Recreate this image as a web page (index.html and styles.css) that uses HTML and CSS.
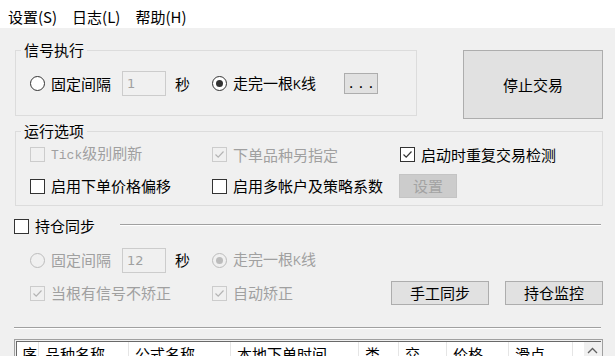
FILE: index.html
```html
<!DOCTYPE html>
<html lang="zh-CN">
<head>
  <meta charset="UTF-8">
  <title>交易设置</title>
  <link rel="stylesheet" href="styles.css">
</head>
<body>

  <div class="menubar">
    <span>设置(S)</span>
    <span>日志(L)</span>
    <span>帮助(H)</span>
  </div>

  <div class="main">

    <div class="top">
      <fieldset class="group signal">
        <legend>信号执行</legend>
        <div class="cols">
          <div class="cell">
            <label class="opt"><span class="radio"></span><span>固定间隔</span></label>
            <span class="num">1</span>
            <span class="unit">秒</span>
          </div>
          <div class="cell">
            <label class="opt"><span class="radio on"></span><span>走完一根<span class="half">K</span>线</span></label>
            <button class="btn dots">...</button>
          </div>
        </div>
      </fieldset>
      <button class="btn stop">停止交易</button>
    </div>

    <fieldset class="group options">
      <legend>运行选项</legend>
      <div class="cols opt-row">
        <label class="opt off"><span class="box"></span><span><span class="mono">Tick</span>级别刷新</span></label>
        <label class="opt off"><span class="box"><svg viewBox="0 0 13 13"><path d="M2.5 6.5 L5.2 9.2 L10.5 3.5"/></svg></span><span>下单品种另指定</span></label>
        <label class="opt"><span class="box"><svg viewBox="0 0 13 13"><path d="M2.5 6.5 L5.2 9.2 L10.5 3.5"/></svg></span><span>启动时重复交易检测</span></label>
      </div>
      <div class="cols opt-row second">
        <label class="opt"><span class="box"></span><span>启用下单价格偏移</span></label>
        <label class="opt"><span class="box"></span><span>启用多帐户及策略系数</span></label>
        <button class="btn setup" disabled>设置</button>
      </div>
    </fieldset>

    <div class="sync-head">
      <label class="opt"><span class="box"></span><span>持仓同步</span></label>
      <div class="rule"></div>
    </div>

    <div class="sync-body">
      <div class="cols sync-row">
        <div class="cell">
          <label class="opt off"><span class="radio"></span><span>固定间隔</span></label>
          <span class="num">12</span>
          <span class="unit">秒</span>
        </div>
        <label class="opt off"><span class="radio on"></span><span>走完一根<span class="half">K</span>线</span></label>
      </div>
      <div class="cols sync-row buttons-row">
        <label class="opt off"><span class="box"><svg viewBox="0 0 13 13"><path d="M2.5 6.5 L5.2 9.2 L10.5 3.5"/></svg></span><span>当根有信号不矫正</span></label>
        <label class="opt off"><span class="box"><svg viewBox="0 0 13 13"><path d="M2.5 6.5 L5.2 9.2 L10.5 3.5"/></svg></span><span>自动矫正</span></label>
        <div class="actions">
          <button class="btn action">手工同步</button>
          <button class="btn action">持仓监控</button>
        </div>
      </div>
    </div>

    <div class="sep"></div>

    <div class="table">
      <div class="thead">
        <div class="th w-no">序</div>
        <div class="th w-name">品种名称</div>
        <div class="th w-formula">公式名称</div>
        <div class="th w-time">本地下单时间</div>
        <div class="th w-type">类</div>
        <div class="th w-trade">交</div>
        <div class="th w-price">价格</div>
        <div class="th w-slip">滑点</div>
        <div class="th-fill"></div>
        <div class="scroll">
          <svg viewBox="0 0 17 12"><path d="M4 8 L8.5 3.5 L13 8"/></svg>
        </div>
      </div>
    </div>

  </div>

</body>
</html>
```

FILE: styles.css
```css
* {
  box-sizing: border-box;
}

body {
  margin: 0;
  height: 356px;
  overflow: hidden;
  background-color: #f0f0f0;
  color: #000;
  font-family: "Noto Sans CJK SC", sans-serif;
  font-size: 15px;
  line-height: 18px;
}

.menubar {
  height: 28px;
  background-color: #fff;
  display: flex;
  gap: 15px;
  padding: 8px 0 0 8px;
}

.main {
  padding: 0 12px 0 14px;
}

/* group boxes */

.top {
  display: flex;
  align-items: flex-start;
  margin-top: 13px;
}

.group {
  margin: 0 0 0 1px;
  min-width: 0;
  border: 1px solid #dcdcdc;
  padding: 12px 0 19px 14px;
}

.group legend {
  padding: 0 3px;
  margin-left: -9px;
  line-height: 18px;
}

.signal {
  width: 402px;
}

.options {
  margin-top: 3px;
  padding: 4px 0 7px 14px;
}

.cols {
  display: grid;
  grid-template-columns: 182px 188px auto;
  align-items: center;
}

.cell {
  display: flex;
  align-items: center;
}

.opt-row {
  height: 20px;
}

.opt-row.second {
  height: 24px;
  margin-top: 10px;
}

/* options */

.opt {
  display: flex;
  align-items: center;
  gap: 6px;
  white-space: nowrap;
}

.opt.off {
  color: #a0a0a0;
}

.mono {
  font-family: "Liberation Mono", monospace;
  font-size: 13px;
}

.half {
  font-size: 12px;
  font-family: "Liberation Sans", sans-serif;
}

.radio {
  position: relative;
  width: 15px;
  height: 15px;
  border-radius: 50%;
  border: 1px solid #333;
  background-color: #fff;
}

.radio.on::after {
  content: "";
  position: absolute;
  left: 3px;
  top: 3px;
  width: 7px;
  height: 7px;
  border-radius: 50%;
  background-color: #333;
}

.off .radio {
  border-color: #bcbcbc;
  background-color: #f0f0f0;
}

.off .radio.on::after {
  background-color: #bcbcbc;
}

.box {
  width: 15px;
  height: 15px;
  border: 1px solid #333;
  background-color: #fff;
  display: flex;
}

.box svg {
  width: 13px;
  height: 13px;
}

.box path {
  fill: none;
  stroke: #333;
  stroke-width: 1.2;
}

.off .box {
  border-color: #cccccc;
  background-color: #f0f0f0;
}

.off .box path {
  stroke: #b4b4b4;
}

.num {
  width: 44px;
  height: 25px;
  margin-left: 11px;
  border: 1px solid #cccccc;
  color: #a0a0a0;
  padding-left: 4px;
  line-height: 23px;
  font-family: "DejaVu Sans", sans-serif;
  font-size: 13px;
}

.unit {
  margin-left: 9px;
}

/* buttons */

.btn {
  font-family: inherit;
  font-size: 15px;
  line-height: 18px;
  color: #000;
  background-color: #e1e1e1;
  border: 1px solid #adadad;
  padding: 0;
}

.dots {
  width: 34px;
  height: 21px;
  margin: 0 22px 0 auto;
  letter-spacing: 2px;
  padding-left: 2px;
  font-family: "DejaVu Sans Mono", monospace;
  font-size: 13px;
}

.stop {
  width: 140px;
  height: 69px;
  margin: 9px 0 0 46px;
}

.setup {
  width: 58px;
  height: 24px;
  margin-left: -1px;
  background-color: #cccccc;
  border-color: #c4c4c4;
  color: #a3a3a3;
}

.action {
  width: 98px;
  height: 24px;
}

.actions {
  display: flex;
  gap: 16px;
}

/* position sync */

.sync-head {
  display: flex;
  align-items: center;
  height: 20px;
  margin-top: 10px;
}

.rule {
  flex: 1;
  margin: 0 2px 2px 25px;
  border-top: 1px solid #a0a0a0;
  border-bottom: 1px solid #fff;
}

.sync-body {
  padding-left: 16px;
}

.sync-row {
  height: 26px;
  margin-top: 11px;
}

.buttons-row {
  grid-template-columns: 182px 1fr auto;
  height: 24px;
  margin-top: 8px;
}

.sep {
  margin: 22px 2px 0 0;
  border-top: 1px solid #a0a0a0;
  border-bottom: 1px solid #fff;
}

/* table */

.table {
  margin-top: 10px;
  border: 1px solid #a0a0a0;
  padding: 1px;
}

.thead {
  display: flex;
  height: 40px;
  background-color: #fff;
  border-top: 1px solid #696969;
  border-left: 1px solid #696969;
}

.th {
  border-right: 1px solid #e5e5e5;
  padding: 3px 0 0 6px;
  white-space: nowrap;
  overflow: hidden;
}

.w-no { width: 22px; padding-left: 5px; }
.w-name { width: 90px; }
.w-formula { width: 102px; }
.w-time { width: 128px; }
.w-type { width: 40px; }
.w-trade { width: 48px; }
.w-price { width: 62px; }
.w-slip { width: 64px; }

.th-fill {
  flex: 1;
}

.scroll {
  width: 17px;
  background-color: #f0f0f0;
}

.scroll svg {
  width: 17px;
  height: 12px;
  margin-top: 3px;
}

.scroll path {
  fill: none;
  stroke: #606060;
  stroke-width: 1.3;
}
```
